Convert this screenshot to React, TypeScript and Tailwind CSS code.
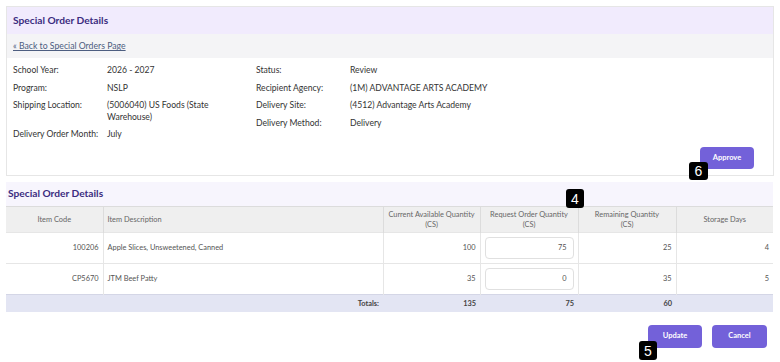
import React from "react";

const font = { fontFamily: "Lato, 'Open Sans', sans-serif" };

function Badge({ n, className }: { n: string; className: string }) {
  return (
    <div
      className={`absolute flex items-center justify-center bg-black text-white rounded-[3px] text-[14px] leading-none ${className}`}
      style={{ fontFamily: "'Liberation Sans', Arial, sans-serif" }}
    >
      {n}
    </div>
  );
}

function Row({ label, value, vw }: { label: string; value: React.ReactNode; vw: string }) {
  return (
    <div className="flex">
      <div className="w-[94px] shrink-0">{label}</div>
      <div className={vw}>{value}</div>
    </div>
  );
}

export default function App() {
  const th = "border-r border-[#dcdcdc] px-[4px] text-center font-normal text-[#666] text-[7.4px] leading-[10px]";
  const td = "border-r border-t border-[#e6e6e6] px-[4px] text-right text-[#555] text-[7.4px]";
  return (
    <div className="relative w-[780px] h-[362px] bg-white px-[6px] pt-[6px]" style={font}>
      {/* Card 1 */}
      <div className="border border-[#e6e6e6] h-[170px] flex flex-col">
        <div className="h-[27px] bg-[#f1ebfd] px-[6px] flex items-center text-[10.2px] font-bold text-[#3b2c80]">
          Special Order Details
        </div>
        <div className="h-[24px] bg-[#f4f4f6] px-[6px] flex items-center">
          <a className="text-[8.7px] underline text-[#4d5d80]">« Back to Special Orders Page</a>
        </div>
        <div className="flex px-[6px] pt-[7px] text-[8.6px] leading-[11.5px] text-[#333]">
          <div className="w-[243px] flex flex-col gap-[6px]">
            <Row vw="w-[125px]" label="School Year:" value="2026 - 2027" />
            <Row vw="w-[125px]" label="Program:" value="NSLP" />
            <Row vw="w-[125px]" label="Shipping Location:" value="(5006040) US Foods (State Warehouse)" />
            <Row vw="w-[125px]" label="Delivery Order Month:" value="July" />
          </div>
          <div className="flex flex-col gap-[6px]">
            <Row vw="w-[200px]" label="Status:" value="Review" />
            <Row vw="w-[200px]" label="Recipient Agency:" value="(1M) ADVANTAGE ARTS ACADEMY" />
            <Row vw="w-[200px]" label="Delivery Site:" value="(4512) Advantage Arts Academy" />
            <Row vw="w-[200px]" label="Delivery Method:" value="Delivery" />
          </div>
        </div>
        <div className="flex justify-end pr-[19px] mt-auto mb-[6px]">
          <button className="h-[22px] w-[54px] rounded-[4px] bg-[#7361d9] text-white text-[7.5px] font-bold">Approve</button>
        </div>
      </div>

      {/* Section 2 */}
      <div className="mt-[6px] w-[767px]">
        <div className="h-[24px] bg-[#f7f5fd] px-[2px] flex items-center text-[10.2px] font-bold text-[#3b2c80]">
          Special Order Details
        </div>
        <table className="w-[767px] border-collapse table-fixed">
          <colgroup>
            <col className="w-[97px]" />
            <col className="w-[280px]" />
            <col className="w-[97px]" />
            <col className="w-[98px]" />
            <col className="w-[98px]" />
            <col className="w-[97px]" />
          </colgroup>
          <thead>
            <tr className="h-[26px] bg-[#efefef] border-t border-[#dcdcdc]">
              <th className={th}>Item Code</th>
              <th className={`${th} !text-left`}>Item Description</th>
              <th className={th}>Current Available Quantity<br />(CS)</th>
              <th className={th}>Request Order Quantity<br />(CS)</th>
              <th className={th}>Remaining Quantity<br />(CS)</th>
              <th className={`${th} border-r-0`}>Storage Days</th>
            </tr>
          </thead>
          <tbody>
            {[
              ["100206", "Apple Slices, Unsweetened, Canned", "100", "75", "25", "4"],
              ["CP5670", "JTM Beef Patty", "35", "0", "35", "5"],
            ].map((r) => (
              <tr key={r[0]} className="h-[31px]">
                <td className={td}>{r[0]}</td>
                <td className={`${td} !text-left`}>{r[1]}</td>
                <td className={td}>{r[2]}</td>
                <td className={td}>
                  <div className="h-[22px] rounded-[4px] border border-[#e0e0e0] bg-white flex items-center justify-end pr-[6px]">
                    {r[3]}
                  </div>
                </td>
                <td className={td}>{r[4]}</td>
                <td className={`${td} border-r-0`}>{r[5]}</td>
              </tr>
            ))}
            <tr className="h-[17px] bg-[#e3e5f3] text-[7.4px] font-bold text-[#444]">
              <td className="border-t border-[#d4d6e6]"></td>
              <td className="border-t border-[#d4d6e6] text-right px-[4px]">Totals:</td>
              <td className="border-t border-[#d4d6e6] text-right px-[4px]">135</td>
              <td className="border-t border-[#d4d6e6] text-right px-[4px]">75</td>
              <td className="border-t border-[#d4d6e6] text-right px-[4px]">60</td>
              <td className="border-t border-[#d4d6e6]"></td>
            </tr>
          </tbody>
        </table>
        <div className="flex justify-end gap-[10px] mt-[13px] pr-[6px]">
          <button className="h-[23px] w-[54px] rounded-[4px] bg-[#7361d9] text-white text-[7.5px] font-bold">Update</button>
          <button className="h-[23px] w-[55px] rounded-[4px] bg-[#7361d9] text-white text-[7.5px] font-bold">Cancel</button>
        </div>
      </div>

      <Badge n="6" className="left-[689px] top-[162px] w-[19px] h-[18px]" />
      <Badge n="4" className="left-[566px] top-[189px] w-[18px] h-[19px]" />
      <Badge n="5" className="left-[639px] top-[341px] w-[18px] h-[19px]" />
    </div>
  );
}
